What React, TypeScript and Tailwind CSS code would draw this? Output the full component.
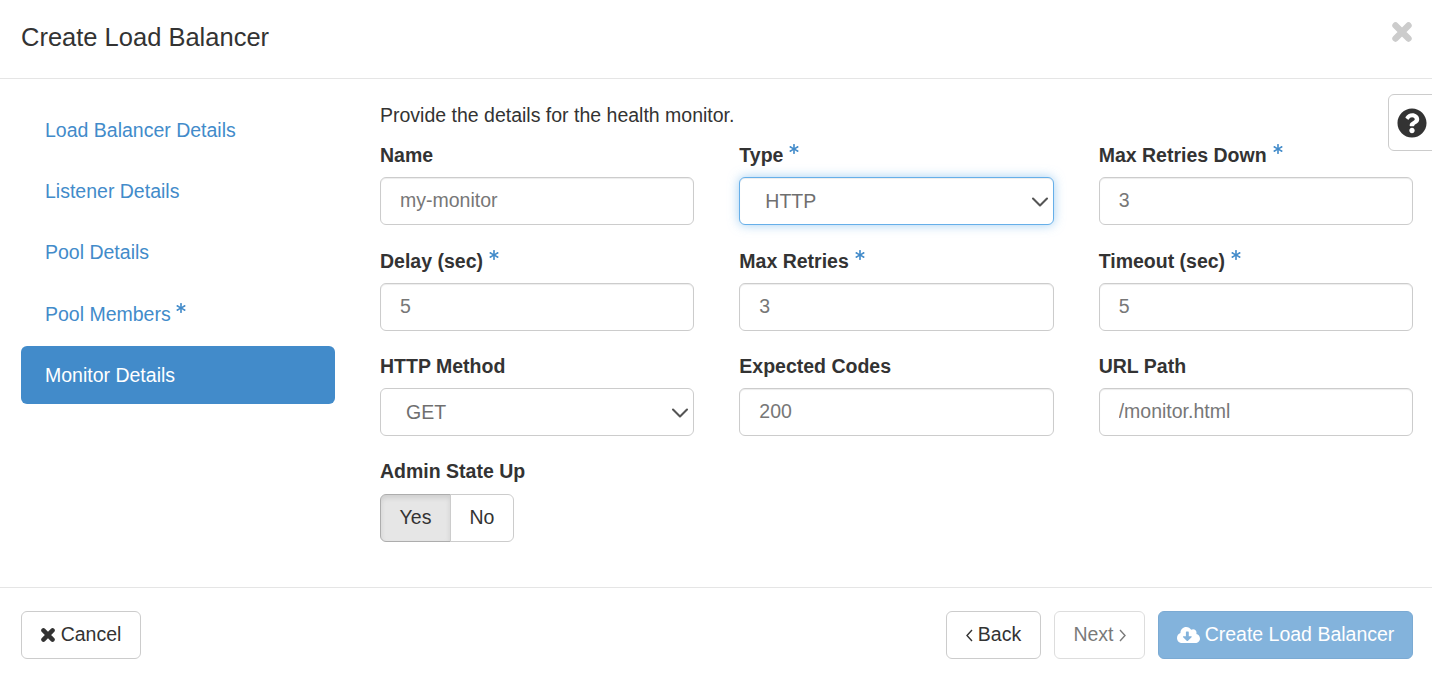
import { FaQuestionCircle, FaCloudDownloadAlt, FaAsterisk } from "react-icons/fa";
import { ChevronDown } from "lucide-react";

const inputClass = "h-[48px] w-full rounded-[6px] border border-[#ccc] bg-white px-[19px] pb-[1px] text-[19.5px] text-[#333] placeholder:text-[#777] shadow-[inset_0_1px_1px_rgba(0,0,0,0.075)] outline-none";

function Star({ className = "" }: { className?: string }) {
    return <FaAsterisk className={"inline-block h-[10px] w-[10px] text-[#428bca] " + className} />;
}

function Times({ className = "" }: { className?: string }) {
    return (
        <svg viewBox="0 0 20 20" className={className} fill="none" stroke="currentColor" strokeWidth="6.4" strokeLinecap="round">
            <path d="M3.5 3.5 L16.5 16.5 M16.5 3.5 L3.5 16.5" />
        </svg>
    );
}

function Angle({ left }: { left?: boolean }) {
    return (
        <svg viewBox="0 0 7 13" className="h-[13px] w-[7px]" fill="none" stroke="currentColor" strokeWidth="1.4">
            <path d={left ? "M6 1 L1 6.5 L6 12" : "M1 1 L6 6.5 L1 12"} />
        </svg>
    );
}

function Field({ label, required, children }: { label: string; required?: boolean; children: React.ReactNode }) {
    return (
        <div className="flex flex-col">
            <div className="flex h-[28px] items-center font-bold leading-[28px] mb-[8px]">
                <span>{label}</span>
                {required && <Star className="ml-[6px] -mt-[12px]" />}
            </div>
            {children}
        </div>
    );
}

function Select({ value, focused }: { value: string; focused?: boolean }) {
    return (
        <div className="relative">
            <select className={["h-[48px] w-full appearance-none rounded-[6px] border bg-white px-[25px] text-[19.5px] text-[#6f6f6f] outline-none", focused ? "border-[#66afe9] shadow-[inset_0_1px_1px_rgba(0,0,0,0.075),0_0_11px_rgba(102,175,233,0.6)]" : "border-[#ccc]"].join(" ")}>
                <option>{value}</option>
            </select>
            <ChevronDown size={28} strokeWidth={1.8} className="pointer-events-none absolute right-0 top-[11px] text-[#555]" />
        </div>
    );
}

function Nav({ label, active, required }: { label: string; active?: boolean; required?: boolean }) {
    return (
        <a className={["flex h-[58px] items-center rounded-[6px] px-[24px] pt-[1px]", active ? "bg-[#428bca] text-white" : "text-[#428bca]"].join(" ")}>
            {label}
            {required && <Star className="ml-[5px] -mt-[12px]" />}
        </a>
    );
}

export default function App() {
    return (
        <div className="relative flex h-[677px] w-[1432px] flex-col overflow-hidden bg-white font-['Liberation_Sans',Arial,sans-serif] text-[19.5px] text-[#333]">
            <header className="flex h-[79px] shrink-0 items-center justify-between border-b border-[#e5e5e5] pl-[21px] pr-[20px]">
                <h4 className="text-[25.5px] leading-none -mt-[2px]">Create Load Balancer</h4>
                <Times className="-mt-[15px] h-[20px] w-[20px] text-[#ccc]" />
            </header>

            <button className="absolute left-[1388px] top-[94px] flex h-[57px] w-[50px] items-center rounded-[6px] border border-[#ccc] bg-white pl-[8px]">
                <FaQuestionCircle className="h-[30px] w-[30px] text-[#333]" />
            </button>

            <main className="flex h-[508px] shrink-0 pl-[21px] pr-[19px] pt-[22px]">
                <nav className="flex w-[314px] shrink-0 flex-col gap-[3.25px]">
                    <Nav label="Load Balancer Details" />
                    <Nav label="Listener Details" />
                    <Nav label="Pool Details" />
                    <Nav label="Pool Members" required />
                    <Nav label="Monitor Details" active />
                </nav>
                <section className="ml-[45px] flex-1">
                    <p className="mb-[12.25px] leading-[28px]">Provide the details for the health monitor.</p>
                    <div className="grid grid-cols-3 gap-x-[45px] gap-y-[21.5px]">
                        <Field label="Name">
                            <input className={inputClass} placeholder="my-monitor" />
                        </Field>
                        <Field label="Type" required>
                            <Select value="HTTP" focused />
                        </Field>
                        <Field label="Max Retries Down" required>
                            <input className={inputClass} placeholder="3" />
                        </Field>
                        <Field label="Delay (sec)" required>
                            <input className={inputClass} placeholder="5" />
                        </Field>
                        <Field label="Max Retries" required>
                            <input className={inputClass} placeholder="3" />
                        </Field>
                        <Field label="Timeout (sec)" required>
                            <input className={inputClass} placeholder="5" />
                        </Field>
                        <Field label="HTTP Method">
                            <Select value="GET" />
                        </Field>
                        <Field label="Expected Codes">
                            <input className={inputClass} placeholder="200" />
                        </Field>
                        <Field label="URL Path">
                            <input className={inputClass} placeholder="/monitor.html" />
                        </Field>
                        <div className="flex flex-col">
                            <div className="mb-[8px] flex h-[28px] items-center font-bold">Admin State Up</div>
                            <div className="flex h-[48px]">
                                <button className="w-[71px] rounded-l-[6px] border border-[#adadad] bg-[#e6e6e6] shadow-[inset_0_3px_5px_rgba(0,0,0,0.1)]">Yes</button>
                                <button className="-ml-px w-[64px] rounded-r-[6px] border border-[#ccc] bg-white">No</button>
                            </div>
                        </div>
                    </div>
                </section>
            </main>

            <footer className="flex flex-1 items-start justify-between border-t border-[#e5e5e5] pl-[21px] pr-[19px] pt-[23px]">
                <button className="flex h-[48px] w-[120px] items-center justify-center gap-[6px] rounded-[6px] border border-[#ccc] bg-white">
                    <Times className="h-[14px] w-[14px]" />
                    Cancel
                </button>
                <div className="flex gap-[13px]">
                    <button className="flex h-[48px] w-[95px] items-center justify-center gap-[5px] rounded-[6px] border border-[#ccc] bg-white">
                        <Angle left />
                        Back
                    </button>
                    <button className="flex h-[48px] w-[91px] items-center justify-center gap-[5px] rounded-[6px] border border-[#ccc] bg-white opacity-65">
                        Next
                        <Angle />
                    </button>
                    <button className="flex h-[48px] w-[255px] items-center justify-center gap-[5px] rounded-[6px] border border-[#357ebd] bg-[#428bca] text-white opacity-65">
                        <FaCloudDownloadAlt className="h-[20px] w-[23px]" />
                        Create Load Balancer
                    </button>
                </div>
            </footer>
        </div>
    );
}
